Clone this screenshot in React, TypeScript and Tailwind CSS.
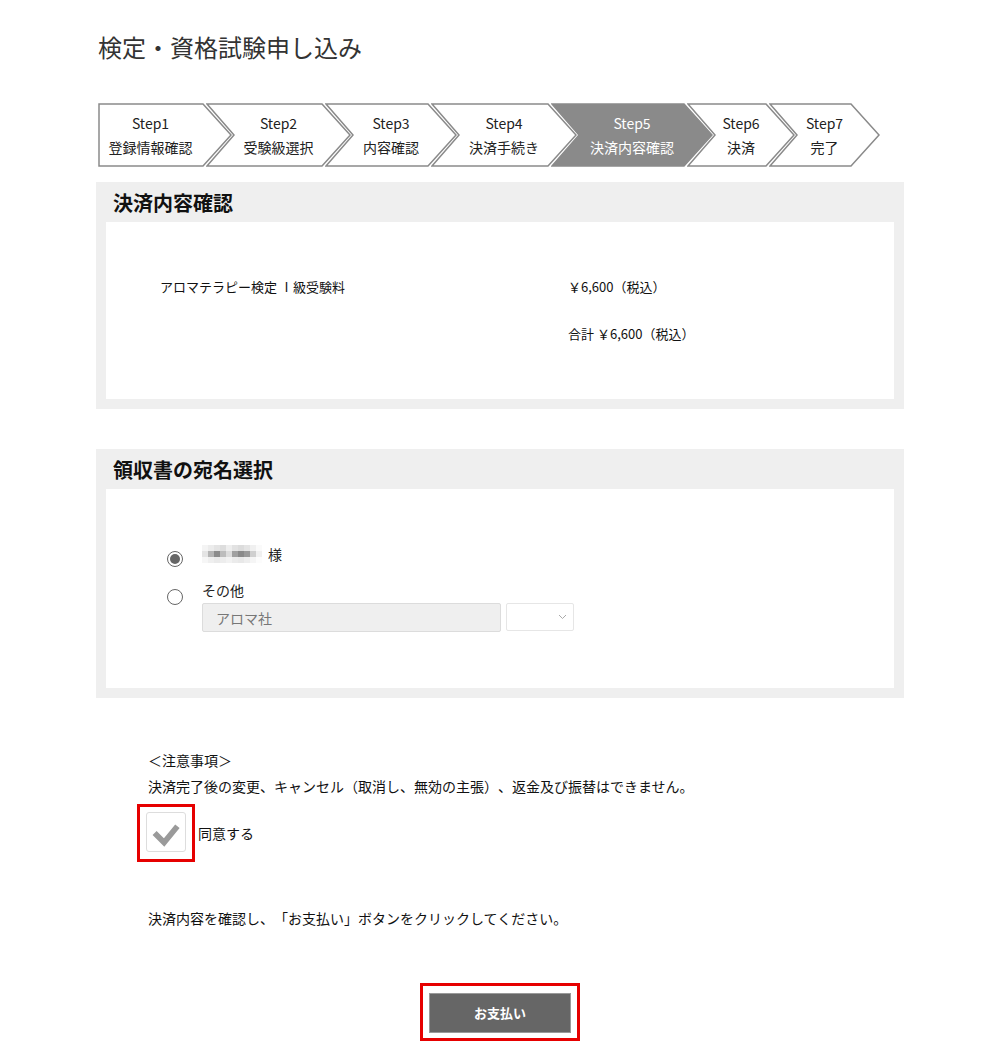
import React from 'react'

const jp = "font-['Noto_Sans_CJK_JP','Noto_Sans',sans-serif] [text-spacing-trim:space-all]"

type Step = { no: string; label: string; w: string; first?: boolean; active?: boolean; width: number }

const steps: Step[] = [
  { no: 'Step1', label: '登録情報確認', w: 'w-[134px]', width: 134, first: true },
  { no: 'Step2', label: '受験級選択', w: 'w-[145px]', width: 145 },
  { no: 'Step3', label: '内容確認', w: 'w-[132px]', width: 132 },
  { no: 'Step4', label: '決済手続き', w: 'w-[146px]', width: 146 },
  { no: 'Step5', label: '決済内容確認', w: 'w-[162px]', width: 162, active: true },
  { no: 'Step6', label: '決済', w: 'w-[108px]', width: 108 },
  { no: 'Step7', label: '完了', w: 'w-[111px]', width: 111 },
]

function StepArrow({ step }: { step: Step }) {
  const d = 29
  const w = step.width
  const pts = step.first
    ? `1,1 ${w - d},1 ${w - 1},32 ${w - d},63 1,63`
    : `1,1 ${w - d},1 ${w - 1},32 ${w - d},63 1,63 ${d - 1},32`
  return (
    <div className={`relative h-[64px] shrink-0 ${step.w} ${step.first ? '' : '-ml-[26px]'}`}>
      <svg className="absolute inset-0" width={w} height={64} viewBox={`0 0 ${w} 64`}>
        <polygon
          points={pts}
          fill={step.active ? '#8a8a8a' : '#ffffff'}
          stroke="#8a8a8a"
          strokeWidth="1.5"
          strokeLinejoin="miter"
        />
      </svg>
      <div
        className={`relative flex h-full flex-col items-center justify-center text-[14px] leading-[24px] ${
          step.first ? 'pr-[29px]' : 'px-[29px]'
        } ${step.active ? 'text-white' : 'text-[#222]'}`}
      >
        <span>{step.no}</span>
        <span>{step.label}</span>
      </div>
    </div>
  )
}

function Section({ title, children }: { title: string; children: React.ReactNode }) {
  return (
    <section className="bg-[#efefef] px-[10px] pb-[10px]">
      <h2 className="flex h-[40px] items-center pl-[7px] pt-[1px] text-[20px] font-bold text-[#111]">{title}</h2>
      <div className="bg-white">{children}</div>
    </section>
  )
}

const blurRows = [
  ['bg-[#f4f4f4]', 'bg-[#ececec]', 'bg-[#e4e4e4]', 'bg-[#dddddd]', 'bg-[#eeeeee]', 'bg-[#e2e2e2]', 'bg-[#dcdcdc]', 'bg-[#e4e4e4]', 'bg-[#f0f0f0]', 'bg-[#fafafa]'],
  ['bg-[#e4e4e4]', 'bg-[#b5b5b5]', 'bg-[#8c8c8c]', 'bg-[#bcbcbc]', 'bg-[#dcdcdc]', 'bg-[#a0a0a0]', 'bg-[#8a8a8a]', 'bg-[#9a9a9a]', 'bg-[#cfcfcf]', 'bg-[#f0f0f0]'],
  ['bg-[#f6f6f6]', 'bg-[#efefef]', 'bg-[#eaeaea]', 'bg-[#ededed]', 'bg-[#f2f2f2]', 'bg-[#ebebeb]', 'bg-[#e8e8e8]', 'bg-[#eeeeee]', 'bg-[#f5f5f5]', 'bg-[#fcfcfc]'],
]

function BlurredName() {
  return (
    <div className="flex flex-col">
      {blurRows.map((row, i) => (
        <div key={i} className="flex">
          {row.map((c, j) => (
            <div key={j} className={`h-[6px] w-[6px] ${c}`} />
          ))}
        </div>
      ))}
    </div>
  )
}

function Radio({ checked }: { checked?: boolean }) {
  return (
    <span className="flex h-[16px] w-[16px] shrink-0 items-center justify-center rounded-full border border-[#666] bg-white">
      {checked && <span className="h-[10px] w-[10px] rounded-full bg-[#666]" />}
    </span>
  )
}

export default function App() {
  return (
    <div className={`min-h-[1055px] bg-white text-[#222] ${jp}`}>
      <div className="mx-auto w-[808px] pb-[17px]">
        <h1 className="pl-[2px] pt-[30px] text-[24px] leading-[34px] text-[#333]">検定・資格試験申し込み</h1>

        <div className="mt-[39px] flex pl-[2px]">
          {steps.map((s) => (
            <StepArrow key={s.no} step={s} />
          ))}
        </div>

        <div className="mt-[15px]">
          <Section title="決済内容確認">
            <div className="grid grid-cols-[408px_1fr] gap-y-[27px] pb-[55px] pl-[54px] pt-[55px] text-[13px] leading-[20px] text-[#111]">
              <span>アロマテラピー検定 Ⅰ級受験料</span>
              <span>￥6,600（税込）</span>
              <span />
              <span>合計 ￥6,600（税込）</span>
            </div>
          </Section>
        </div>

        <div className="mt-[40px]">
          <Section title="領収書の宛名選択">
            <div className="flex flex-col gap-[13px] pb-[56px] pl-[61px] pt-[55px] text-[14px] leading-[20px]">
              <div className="flex items-start gap-[19px]">
                <span className="mt-[7px]">
                  <Radio checked />
                </span>
                <div className="flex items-center gap-[6px]">
                  <BlurredName />
                  <span>様</span>
                </div>
              </div>
              <div className="flex items-start gap-[19px]">
                <span className="mt-[9px]">
                  <Radio />
                </span>
                <div className="flex flex-col">
                  <span>その他</span>
                  <div className="mt-[3px] flex items-start gap-[5px]">
                    <div className="flex h-[29px] w-[299px] items-center rounded-[2px] border border-[#dcdcdc] bg-[#efefef] pl-[13px] text-[14px] text-[#777]">
                      アロマ社
                    </div>
                    <div className="flex h-[28px] w-[68px] items-center justify-end rounded-[2px] border border-[#e6e6e6] bg-white pr-[6px]">
                      <svg width="9" height="6" viewBox="0 0 9 6">
                        <path d="M1 1 L4.5 4.5 L8 1" fill="none" stroke="#aaa" strokeWidth="1" />
                      </svg>
                    </div>
                  </div>
                </div>
              </div>
            </div>
          </Section>
        </div>

        <div className="pl-[52px] pt-[52px] text-[14px] leading-[20px] text-[#111]">
          <p>＜注意事項＞</p>
          <p className="mt-[6px]">決済完了後の変更、キャンセル（取消し、無効の主張）、返金及び振替はできません。</p>
          <div className="mt-[8px] flex items-center gap-[3px] -ml-[11px]">
            <div className="border-[3px] border-[#e60000] px-[6px] pb-[7px] pt-[5px]">
              <div className="flex h-[40px] w-[40px] items-center justify-center rounded-[3px] border border-[#dddddd] bg-white">
                <svg width="40" height="40" viewBox="0 0 40 40">
                  <path d="M8 21 L18 31 L32 14" fill="none" stroke="#9a9a9a" strokeWidth="6" />
                </svg>
              </div>
            </div>
            <span>同意する</span>
          </div>
          <p className="mt-[46px]">決済内容を確認し、「お支払い」ボタンをクリックしてください。</p>
        </div>

        <div className="mt-[55px] flex justify-center">
          <div className="border-[3px] border-[#e60000] px-[6px] pb-[5px] pt-[7px]">
            <button className="flex h-[40px] w-[142px] items-center justify-center border border-[#9a9a9a] bg-[#666] text-[13px] font-bold text-white">
              お支払い
            </button>
          </div>
        </div>
      </div>
    </div>
  )
}
